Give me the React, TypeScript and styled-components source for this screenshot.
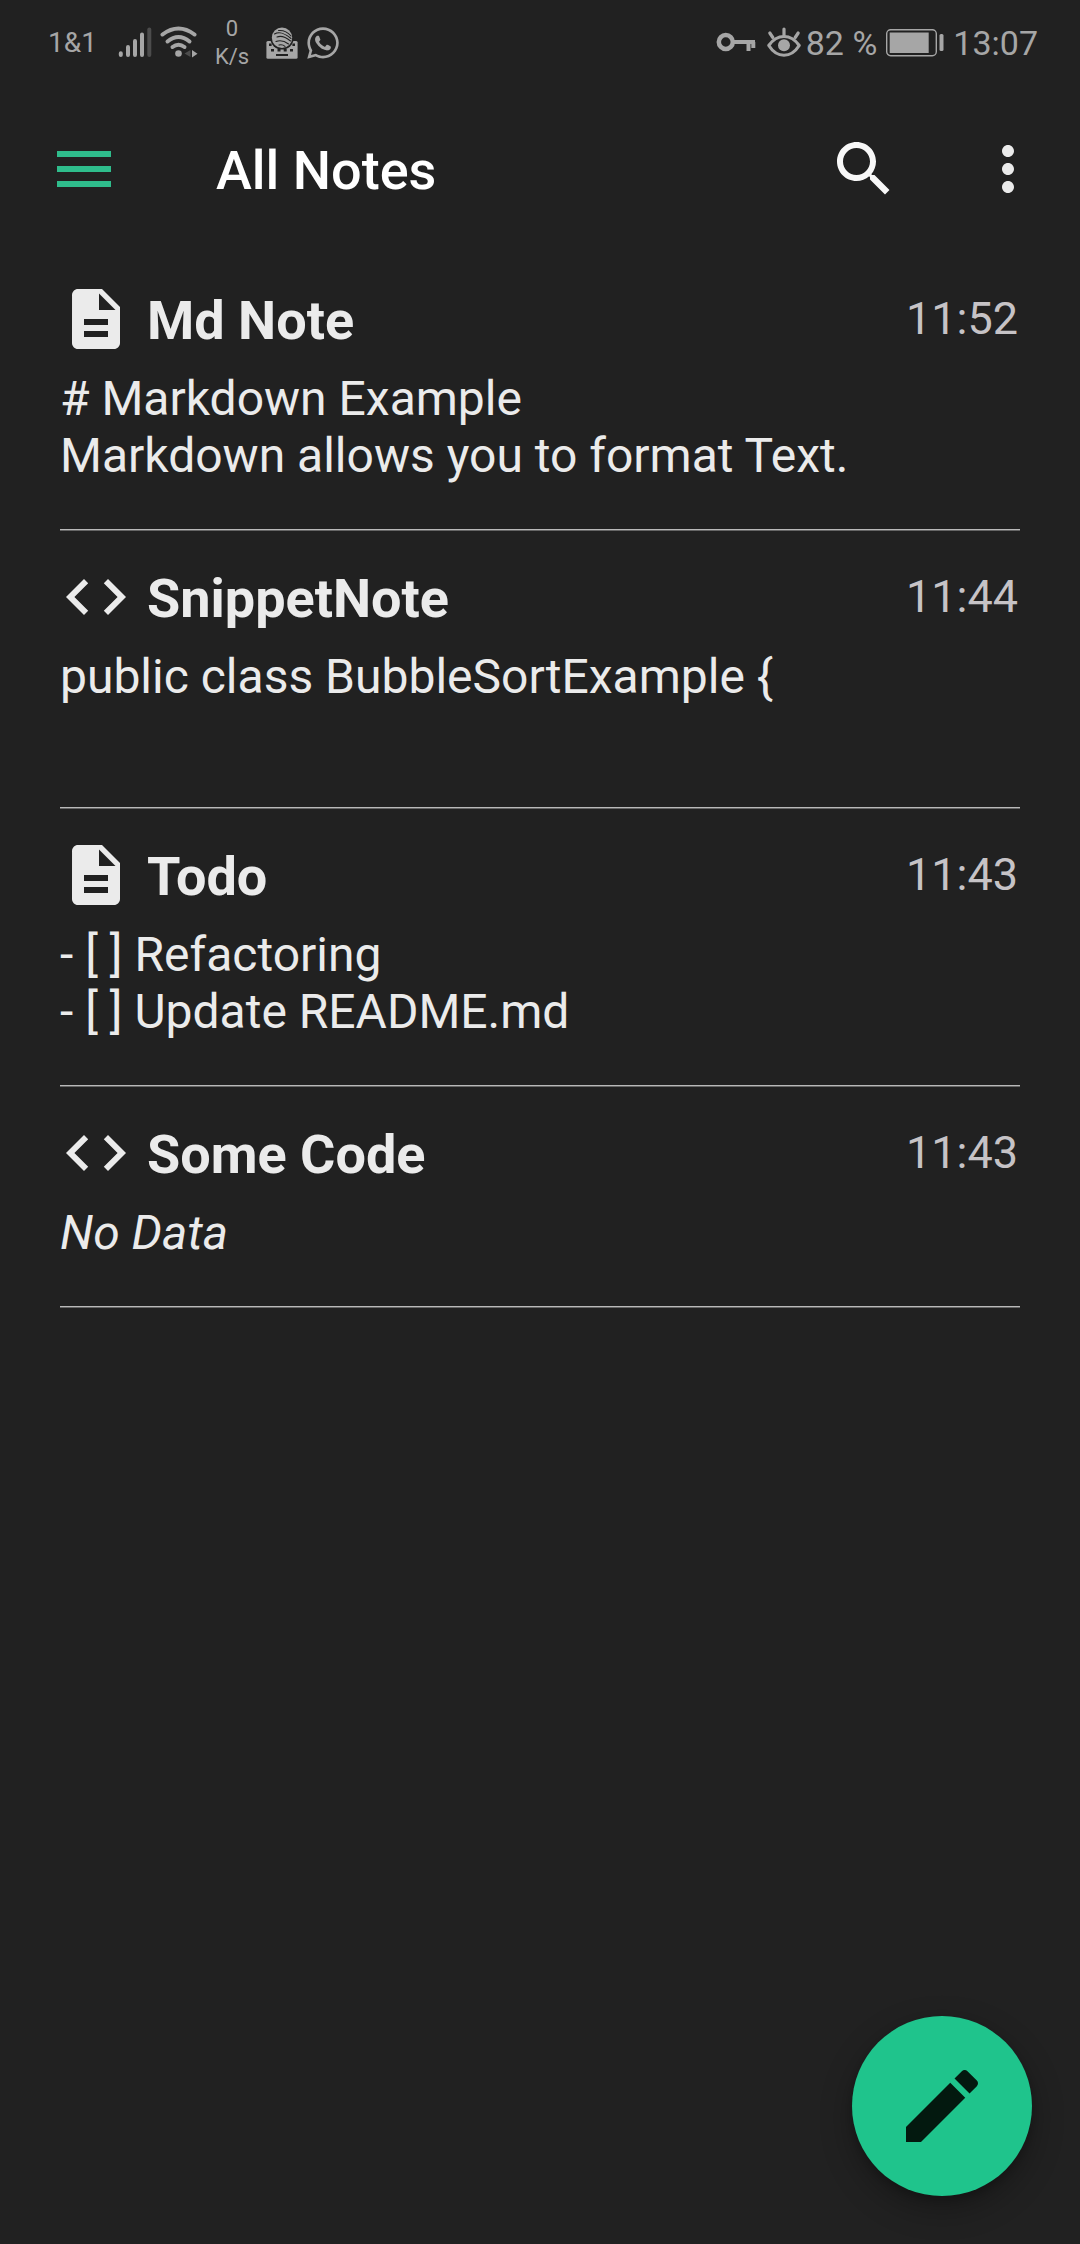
import React from "react";
import styled, { createGlobalStyle, css } from "styled-components";
import { FaWhatsapp } from "react-icons/fa";

const color = {
  background: "#212121",
  status: "#a6a6a6",
  statusDim: "#4c4c4c",
  text: "#ebebeb",
  time: "#c6c3c6",
  accent: "#1fc48c",
  menu: "#2fbd8c",
  ink: "#03190f",
};

const GlobalStyle = createGlobalStyle`
  *, *::before, *::after { box-sizing: border-box; }
  body {
    margin: 0;
    background: ${color.background};
    color: ${color.text};
    font-family: Roboto, "Noto Sans", sans-serif;
  }
`;

const Page = styled.div`
  min-height: 100vh;
  background: ${color.background};
`;

/* ---------- Status bar ---------- */

const StatusBar = styled.div`
  display: flex;
  align-items: center;
  justify-content: space-between;
  height: 86px;
  padding: 0 42px 0 48px;
  color: ${color.status};
`;

const StatusGroup = styled.div<{ $gap: number }>`
  display: flex;
  align-items: center;
  gap: ${(p) => p.$gap}px;
`;

const Carrier = styled.span`
  margin-right: 4px;
  font-size: 28px;
  line-height: 32px;
`;

const StatusText = styled.span`
  font-size: 34px;
  line-height: 40px;
  white-space: nowrap;
`;

const NetSpeed = styled.span`
  display: flex;
  flex-direction: column;
  align-items: center;
  font-size: 22px;
  line-height: 28px;
`;

const StatusSvg = styled.svg`
  display: block;
  height: 36px;
  flex: none;
`;

const SignalIcon = () => (
  <StatusSvg width="36" viewBox="0 0 36 36" aria-hidden="true">
    <g strokeWidth="4" strokeLinecap="round" stroke={color.status}>
      <path d="M3.8 28.3V30M11 22v8M18 16v14M25 9.500v20.500" />
      <path d="M32.300 4.500v25.500" stroke={color.statusDim} />
    </g>
  </StatusSvg>
);

const WifiIcon = () => (
  <StatusSvg width="40" viewBox="0 0 40 36" fill="none" aria-hidden="true">
    <g stroke={color.status} strokeWidth="4" strokeLinecap="round">
      <path d="M3.500 9.500Q19.500-2.500 35.500 9.500" />
      <path d="M8.500 16.500Q19.500 7.500 30.500 16.500" />
      <path d="M13.500 22Q19.500 17.500 25.500 22" />
    </g>
    <circle cx="19.500" cy="28.500" r="3.300" fill={color.status} />
    <path d="M31.500 25v7l-6-3.500z" fill={color.statusDim} />
    <path d="M33 25v7.500l5.500-3.750z" fill={color.status} />
  </StatusSvg>
);

const KeyboardIcon = () => (
  <StatusSvg width="34" viewBox="0 0 34 36" aria-hidden="true">
    <rect x="1.400" y="16" width="31.200" height="17.700" rx="1.500" fill={color.status} />
    <g fill={color.background}>
      <path d="M4 18.500h2.600v2.600H4zM27.400 18.500H30v2.600h-2.600z" />
      <path d="M6 24h3v2.600H6zM12.500 24h3v2.600h-3zM18.700 24h3v2.600h-3zM25 24h3v2.600h-3z" />
      <path d="M11 29h12v2H11z" />
      <circle cx="17" cy="12.800" r="11.800" />
    </g>
    <circle cx="17" cy="12.800" r="10.200" fill={color.status} />
    <g fill="none" stroke={color.background} strokeWidth="1.100" strokeLinecap="round">
      <path d="M9.500 9C14 6.500 20.500 8.500 26 13.500" />
      <path d="M12 12c4.500-1.700 9 .3 13.500 4" />
      <path d="M11 16.500c4-1.500 8.500-.5 12.500 2.500" />
      <path d="M14 20c2.500-.6 4.500 0 6 1.300" />
      <path d="M13.500 5.500C18.500 5 23 7.500 26 11" />
    </g>
  </StatusSvg>
);

const KeyIcon = () => (
  <StatusSvg width="40" viewBox="0 0 40 36" fill="none" aria-hidden="true">
    <g stroke={color.status} strokeWidth="4">
      <circle cx="9.800" cy="17" r="7" strokeWidth="4.500" />
      <path d="M17 17h22M32.500 17v9M37.300 17v6" />
    </g>
  </StatusSvg>
);

const EyeIcon = () => (
  <StatusSvg width="36" viewBox="0 0 36 36" fill="none" aria-hidden="true">
    <g stroke={color.status} strokeWidth="3.200" strokeLinecap="round" strokeLinejoin="round">
      <path d="M2.800 20.500C11 8.500 25 8.500 33.200 20.500 25 33.500 11 33.500 2.800 20.500z" />
      <path d="M18 4v6M3.800 8l3 4.500M32.200 8l-3 4.500" />
    </g>
    <circle cx="18" cy="20.300" r="6" fill={color.status} />
  </StatusSvg>
);

const BatteryIcon = () => (
  <StatusSvg width="60" viewBox="0 0 60 36" fill="none" aria-hidden="true">
    <rect x="1.700" y="4.700" width="49.600" height="26" rx="4" stroke={color.status} strokeWidth="1.400" />
    <rect x="4.700" y="7.500" width="39" height="20.500" fill={color.status} />
    <rect x="54.500" y="9" width="4" height="17" rx="1.500" fill={color.status} />
  </StatusSvg>
);

/* ---------- App bar ---------- */

const AppBar = styled.header`
  display: flex;
  align-items: center;
  padding: 47px 36px 48px 48px;
`;

const IconButton = styled.button`
  display: block;
  flex: none;
  width: 72px;
  height: 72px;
  margin: 0;
  padding: 0;
  border: 0;
  background: none;
  color: ${color.text};
  cursor: pointer;
`;

const headingText = css`
  margin: 0;
  padding-top: 3px;
  font-size: 54px;
  line-height: 63px;
`;

const AppTitle = styled.h1`
  ${headingText}
  flex: 1;
  padding-left: 96px;
  font-weight: 500;
  color: #ffffff;
`;

const Actions = styled.div`
  display: flex;
  gap: 72px;
`;

const MaterialSvg = styled.svg<{ $size: number }>`
  display: block;
  flex: none;
  width: ${(p) => p.$size}px;
  height: ${(p) => p.$size}px;
  fill: currentColor;
`;

type MaterialIconProps = { path: string; size?: number; fill?: string };

const MaterialIcon = ({ path, size = 72, fill }: MaterialIconProps) => (
  <MaterialSvg $size={size} viewBox="0 0 24 24" color={fill} aria-hidden="true">
    <path d={path} />
  </MaterialSvg>
);

const icons = {
  menu: "M3 18h18v-2H3v2zm0-5h18v-2H3v2zm0-7v2h18V6H3z",
  search:
    "M15.5 14h-.79l-.28-.27C15.41 12.59 16 11.11 16 9.5 16 5.91 13.09 3 9.5 3S3 5.91 3 9.500 5.910 16 9.500 16c1.610 0 3.090-.59 4.230-1.570l.27.28v.79l5 4.990L20.490 19l-4.990-5zm-6 0C7.010 14 5 11.990 5 9.500S7.010 5 9.500 5 14 7.010 14 9.500 11.990 14 9.500 14z",
  more: "M12 8c1.100 0 2-.9 2-2s-.9-2-2-2-2 .9-2 2 .9 2 2 2zm0 2c-1.100 0-2 .9-2 2s.9 2 2 2 2-.9 2-2-.9-2-2-2zm0 6c-1.100 0-2 .9-2 2s.9 2 2 2 2-.9 2-2-.9-2-2-2z",
  document:
    "M14 2H6c-1.100 0-1.990.9-1.990 2L4 20c0 1.100.89 2 1.990 2H18c1.100 0 2-.9 2-2V8l-6-6zm2 16H8v-2h8v2zm0-4H8v-2h8v2zm-3-5V3.500L18.500 9H13z",
  code: "M9.400 16.600L4.800 12l4.600-4.600L8 6l-6 6 6 6 1.400-1.400zm5.200 0l4.600-4.600-4.600-4.600L16 6l6 6-6 6-1.400-1.400z",
  edit: "M3 17.250V21h3.750L17.810 9.940l-3.750-3.750L3 17.250zM20.710 7.040c.39-.39.39-1.020 0-1.410l-2.340-2.340c-.39-.39-1.020-.39-1.410 0l-1.830 1.830 3.750 3.750 1.830-1.830z",
};

/* ---------- Notes ---------- */

const NoteList = styled.ul`
  margin: 0;
  padding: 0 60px;
  list-style: none;
`;

const NoteItem = styled.li`
  padding: 30px 0 46px;
  border-bottom: 1px solid #666666;
  box-shadow: inset 0 -1px 0 #b9b9b9;
`;

const NoteHeader = styled.div`
  display: flex;
  align-items: center;
  height: 72px;
`;

const NoteTitle = styled.h2`
  ${headingText}
  flex: 1;
  padding-left: 15px;
  font-weight: 700;
`;

const NoteTime = styled.time`
  padding: 0 2px 2px 0;
  font-size: 45px;
  line-height: 53px;
  color: ${color.time};
`;

const NoteBody = styled.div<{ $empty?: boolean }>`
  margin-top: 15px;
  font-size: 48px;
  line-height: 57px;
  font-style: ${(p) => (p.$empty ? "italic" : "normal")};
`;

const NoteLine = styled.p`
  min-height: 57px;
  margin: 0;
`;

const Fab = styled.button`
  position: fixed;
  right: 48px;
  bottom: 48px;
  display: flex;
  align-items: center;
  justify-content: center;
  width: 180px;
  height: 180px;
  padding: 0;
  border: 0;
  border-radius: 50%;
  background: ${color.accent};
  color: ${color.ink};
  box-shadow: 0 12px 32px rgba(0, 0, 0, 0.3), 0 4px 10px rgba(0, 0, 0, 0.2);
  cursor: pointer;
`;

type Note = {
  kind: "document" | "code";
  title: string;
  time: string;
  lines: string[];
};

const notes: Note[] = [
  {
    kind: "document",
    title: "Md Note",
    time: "11:52",
    lines: ["# Markdown Example", "Markdown allows you to format Text."],
  },
  {
    kind: "code",
    title: "SnippetNote",
    time: "11:44",
    lines: ["public class BubbleSortExample {", ""],
  },
  {
    kind: "document",
    title: "Todo",
    time: "11:43",
    lines: ["- [ ] Refactoring", "- [ ] Update README.md"],
  },
  { kind: "code", title: "Some Code", time: "11:43", lines: [] },
];

const NoteRow = ({ note }: { note: Note }) => {
  const empty = note.lines.length === 0;
  const lines = empty ? ["No Data"] : note.lines;
  return (
    <NoteItem>
      <NoteHeader>
        <MaterialIcon path={icons[note.kind]} />
        <NoteTitle>{note.title}</NoteTitle>
        <NoteTime>{note.time}</NoteTime>
      </NoteHeader>
      <NoteBody $empty={empty}>
        {lines.map((line, i) => (
          <NoteLine key={i}>{line}</NoteLine>
        ))}
      </NoteBody>
    </NoteItem>
  );
};

export default function App() {
  return (
    <Page>
      <GlobalStyle />
      <StatusBar>
        <StatusGroup $gap={16}>
          <Carrier>1&amp;1</Carrier>
          <StatusGroup $gap={6}>
            <SignalIcon />
            <WifiIcon />
          </StatusGroup>
          <NetSpeed>
            <span>0</span>
            <span>K/s</span>
          </NetSpeed>
          <StatusGroup $gap={6}>
            <KeyboardIcon />
            <FaWhatsapp size={36} aria-hidden="true" />
          </StatusGroup>
        </StatusGroup>
        <StatusGroup $gap={8}>
          <StatusGroup $gap={4}>
            <StatusGroup $gap={10}>
              <KeyIcon />
              <EyeIcon />
            </StatusGroup>
            <StatusText>82 %</StatusText>
          </StatusGroup>
          <BatteryIcon />
          <StatusText>13:07</StatusText>
        </StatusGroup>
      </StatusBar>

      <AppBar>
        <IconButton type="button" aria-label="Open menu">
          <MaterialIcon path={icons.menu} fill={color.menu} />
        </IconButton>
        <AppTitle>All Notes</AppTitle>
        <Actions>
          <IconButton type="button" aria-label="Search">
            <MaterialIcon path={icons.search} fill="#f8f8f8" />
          </IconButton>
          <IconButton type="button" aria-label="More options">
            <MaterialIcon path={icons.more} />
          </IconButton>
        </Actions>
      </AppBar>

      <main>
        <NoteList>
          {notes.map((note) => (
            <NoteRow key={note.title} note={note} />
          ))}
        </NoteList>
      </main>

      <Fab type="button" aria-label="New note">
        <MaterialIcon path={icons.edit} size={96} />
      </Fab>
    </Page>
  );
}
